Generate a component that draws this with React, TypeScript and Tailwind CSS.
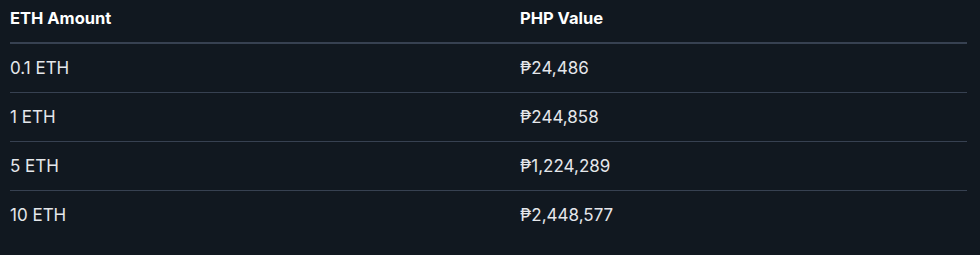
import React from 'react'

const rows = [
  { eth: '0.1 ETH', php: '₱24,486' },
  { eth: '1 ETH', php: '₱244,858' },
  { eth: '5 ETH', php: '₱1,224,289' },
  { eth: '10 ETH', php: '₱2,448,577' },
]

const App = () => {
  return (
    <div
      className="min-h-[255px] w-full bg-[#111820] pl-[10px] pr-[13px] text-[#e5e7eb]"
      style={{ fontFamily: 'Inter, "Noto Sans", sans-serif' }}
    >
      <div className="grid grid-cols-[510px_1fr] border-b-2 border-[#374151] pt-[6px] pb-[12px] text-[16.5px] font-bold leading-6 text-white">
        <div>ETH Amount</div>
        <div>PHP Value</div>
      </div>
      {rows.map((row, i) => (
        <div
          key={row.eth}
          className={
            'grid grid-cols-[510px_1fr] py-3 text-[17px] leading-6 ' +
            (i < rows.length - 1 ? 'border-b border-[#374151]' : '')
          }
        >
          <div>{row.eth}</div>
          <div>{row.php}</div>
        </div>
      ))}
    </div>
  )
}

export default App
